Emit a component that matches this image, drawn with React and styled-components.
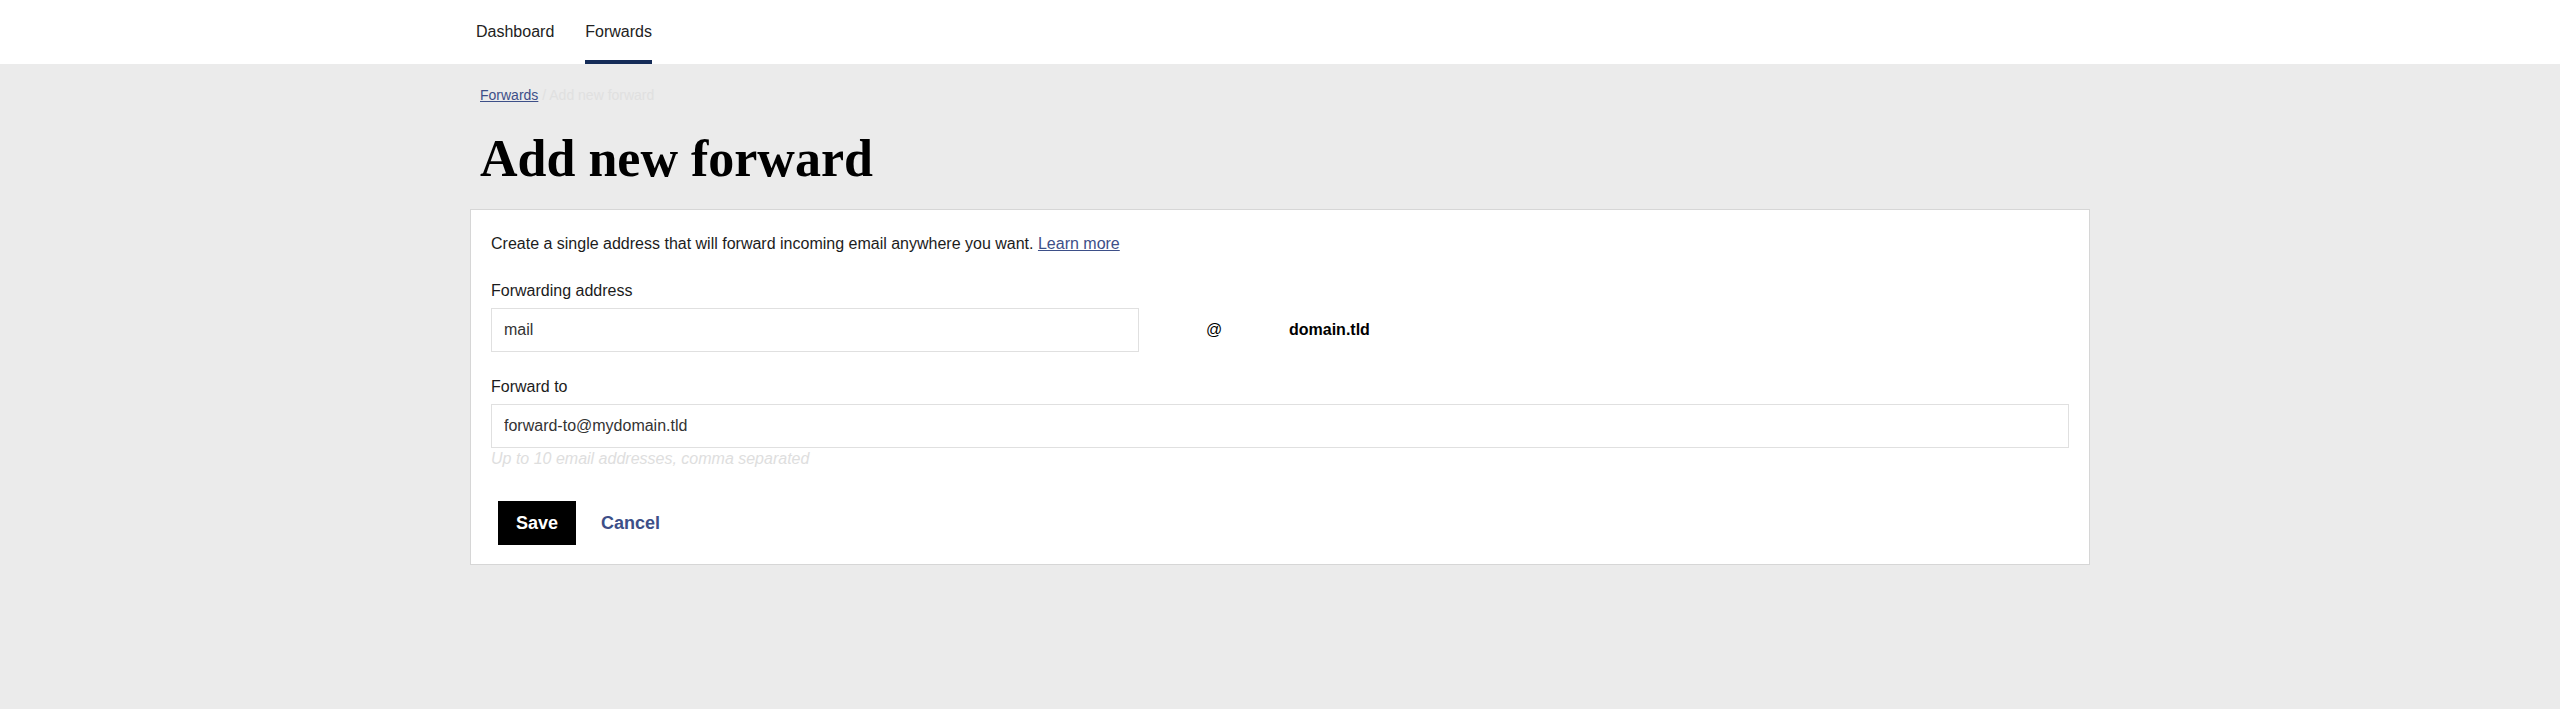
import React from 'react';
import styled, { createGlobalStyle } from 'styled-components';

const GlobalStyle = createGlobalStyle`
  html, body {
    margin: 0;
    padding: 0;
    background: #ebebeb;
    font-family: "Liberation Sans", Arial, sans-serif;
    color: #1c1c1c;
  }
  body {
    min-height: 100vh;
  }
`;

const Header = styled.header`
  background: #fff;
  height: 64px;
`;

const Container = styled.div`
  max-width: 1620px;
  margin: 0 auto;
`;

const Nav = styled.nav`
  display: flex;
  gap: 31px;
  padding-left: 6px;
  height: 64px;
`;

const NavItem = styled.a`
  display: block;
  box-sizing: border-box;
  height: 64px;
  padding-top: 4px;
  line-height: 56px;
  font-size: 16px;
  color: #222;
  text-decoration: none;
  border-bottom: 4px solid ${({ $active }) => ($active ? '#152c58' : 'transparent')};
`;

const Breadcrumb = styled.div`
  margin-top: 21px;
  padding-left: 10px;
  font-size: 14px;
  line-height: 20px;
  color: #e0e0e0;
`;

const CrumbLink = styled.a`
  color: #3d4f88;
  text-decoration: underline;
`;

const Title = styled.h1`
  margin: 23px 0 19px;
  padding-left: 10px;
  font-family: "Liberation Serif", "Times New Roman", serif;
  font-size: 52px;
  line-height: 62px;
  font-weight: bold;
  color: #000;
`;

const Card = styled.section`
  background: #fff;
  border: 1px solid #d6d6d6;
  padding: 22px 20px 19px;
`;

const Intro = styled.p`
  margin: 0 0 23px;
  font-size: 16px;
  line-height: 24px;
`;

const TextLink = styled.a`
  color: #3d4f88;
  text-decoration: underline;
`;

const Field = styled.div`
  margin-bottom: ${({ $last }) => ($last ? '0' : '23px')};
`;

const Label = styled.label`
  display: block;
  font-size: 16px;
  line-height: 24px;
  margin-bottom: 5px;
`;

const AddressRow = styled.div`
  display: grid;
  grid-template-columns: 648px 150px auto;
  align-items: center;
`;

const Input = styled.input`
  box-sizing: border-box;
  width: 100%;
  height: 44px;
  padding: 0 12px;
  border: 1px solid #e0e0e0;
  border-radius: 0;
  font-family: "Liberation Sans", Arial, sans-serif;
  font-size: 16px;
  color: #333;
  background: #fff;
  outline: none;
`;

const At = styled.span`
  text-align: center;
  font-size: 16px;
  color: #000;
`;

const Domain = styled.span`
  font-size: 16px;
  font-weight: bold;
  color: #000;
`;

const Hint = styled.div`
  font-size: 16px;
  line-height: 22px;
  font-style: italic;
  color: #dedede;
`;

const Actions = styled.div`
  display: flex;
  gap: 7px;
  margin-top: 31px;
  padding-left: 7px;
`;

const Button = styled.button`
  height: 44px;
  padding: 0 18px;
  border: none;
  border-radius: 0;
  font-family: "Liberation Sans", Arial, sans-serif;
  font-size: 18px;
  font-weight: bold;
  cursor: pointer;
  background: ${({ $primary }) => ($primary ? '#000' : 'transparent')};
  color: ${({ $primary }) => ($primary ? '#fff' : '#3d4f88')};
`;

export default function App() {
  return (
    <>
      <GlobalStyle />
      <Header>
        <Container>
          <Nav>
            <NavItem href="#">Dashboard</NavItem>
            <NavItem href="#" $active>
              Forwards
            </NavItem>
          </Nav>
        </Container>
      </Header>
      <Container>
        <Breadcrumb>
          <CrumbLink href="#">Forwards</CrumbLink> / Add new forward
        </Breadcrumb>
        <Title>Add new forward</Title>
        <Card>
          <Intro>
            Create a single address that will forward incoming email anywhere you want.{' '}
            <TextLink href="#">Learn more</TextLink>
          </Intro>
          <Field>
            <Label htmlFor="address">Forwarding address</Label>
            <AddressRow>
              <Input id="address" defaultValue="mail" />
              <At>@</At>
              <Domain>domain.tld</Domain>
            </AddressRow>
          </Field>
          <Field $last>
            <Label htmlFor="target">Forward to</Label>
            <Input id="target" defaultValue="forward-to@mydomain.tld" />
            <Hint>Up to 10 email addresses, comma separated</Hint>
          </Field>
          <Actions>
            <Button $primary>Save</Button>
            <Button>Cancel</Button>
          </Actions>
        </Card>
      </Container>
    </>
  );
}
